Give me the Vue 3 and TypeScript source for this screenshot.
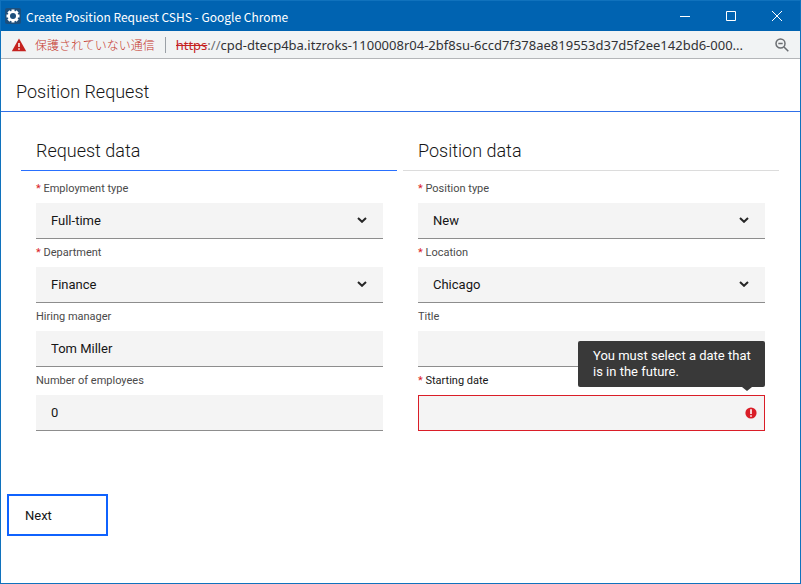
<script setup lang="ts">
import { reactive } from 'vue'

interface Field {
  id: string
  label: string
  kind: 'select' | 'text'
  required?: boolean
  options?: string[]
  error?: string
}
interface Section {
  title: string
  active: boolean
  fields: Field[]
}

const values = reactive<Record<string, string>>({
  employment: 'Full-time',
  department: 'Finance',
  manager: 'Tom Miller',
  employees: '0',
  positionType: 'New',
  location: 'Chicago',
  jobTitle: '',
  startingDate: '',
})

const sections: Section[] = [
  {
    title: 'Request data',
    active: true,
    fields: [
      { id: 'employment', label: 'Employment type', kind: 'select', required: true, options: ['Full-time'] },
      { id: 'department', label: 'Department', kind: 'select', required: true, options: ['Finance'] },
      { id: 'manager', label: 'Hiring manager', kind: 'text' },
      { id: 'employees', label: 'Number of employees', kind: 'text' },
    ],
  },
  {
    title: 'Position data',
    active: false,
    fields: [
      { id: 'positionType', label: 'Position type', kind: 'select', required: true, options: ['New'] },
      { id: 'location', label: 'Location', kind: 'select', required: true, options: ['Chicago'] },
      { id: 'jobTitle', label: 'Title', kind: 'text' },
      {
        id: 'startingDate',
        label: 'Starting date',
        kind: 'text',
        required: true,
        error: 'You must select a date that is in the future.',
      },
    ],
  },
]
</script>

<template>
  <div class="window">
    <header class="titlebar">
      <svg class="app-icon" viewBox="0 0 16 16" aria-hidden="true">
        <rect width="16" height="16" rx="2" fill="#1d4f7c" />
        <g fill="#fff">
          <rect v-for="n in 4" :key="n" x="6.5" y="1.5" width="3" height="13" :transform="`rotate(${n * 45} 8 8)`" />
          <circle cx="8" cy="8" r="5.2" />
        </g>
        <circle cx="8" cy="8" r="3" fill="#1d4f7c" />
      </svg>
      <span class="window-title">Create Position Request CSHS - Google Chrome</span>
      <div class="window-controls">
        <button type="button" aria-label="Minimize">
          <svg viewBox="0 0 12 12"><path d="M1 6.5h10" /></svg>
        </button>
        <button type="button" aria-label="Maximize">
          <svg viewBox="0 0 12 12"><path d="M1.5 1.5h9v9h-9z" /></svg>
        </button>
        <button type="button" aria-label="Close">
          <svg viewBox="0 0 12 12"><path d="M1 1l10 10M11 1L1 11" /></svg>
        </button>
      </div>
    </header>

    <div class="addressbar">
      <svg class="warning" viewBox="0 0 16 14" aria-hidden="true">
        <path d="M8 0.5L15.2 13.3H0.8z" fill="#c5221f" />
        <path d="M8 5v4M8 10.3v1.5" stroke="#fff" stroke-width="1.5" />
      </svg>
      <span class="insecure">保護されていない通信</span>
      <span class="divider"></span>
      <span class="url"><s>https</s><span class="scheme">://</span>cpd-dtecp4ba.itzroks-1100008r04-2bf8su-6ccd7f378ae819553d37d5f2ee142bd6-000...</span>
      <button type="button" class="zoom" aria-label="Zoom">
        <svg viewBox="0 0 14 14"><circle cx="5.5" cy="5.5" r="4.5" /><path d="M9 9l4.3 4.3M3.3 5.5h4.4" /></svg>
      </button>
    </div>

    <main>
      <h1>Position Request</h1>
      <form @submit.prevent>
        <div class="sections">
          <section v-for="section in sections" :key="section.title">
            <h2 :class="{ active: section.active }">{{ section.title }}</h2>
            <div class="fields">
              <div v-for="field in section.fields" :key="field.id" class="field">
                <label :for="field.id" :class="{ strong: field.error }"><span v-if="field.required" class="star">* </span>{{ field.label }}</label>
                <div class="control" :class="{ invalid: field.error }">
                  <select v-if="field.kind === 'select'" :id="field.id" v-model="values[field.id]">
                    <option v-for="option in field.options" :key="option">{{ option }}</option>
                  </select>
                  <input v-else :id="field.id" v-model="values[field.id]" type="text" />
                  <svg v-if="field.kind === 'select'" class="chevron" viewBox="0 0 10 6" aria-hidden="true">
                    <path d="M1 1l4 3.8L9 1" />
                  </svg>
                  <template v-if="field.error">
                    <svg class="alert" viewBox="0 0 12 12" aria-hidden="true">
                      <circle cx="6" cy="6" r="5.6" fill="#da1e28" />
                      <path d="M6 2.2v4.8M6 8.3v1.5" stroke="#fff" stroke-width="1.6" />
                    </svg>
                    <div class="tooltip" role="alert">{{ field.error }}</div>
                  </template>
                </div>
              </div>
            </div>
          </section>
        </div>
        <button type="submit" class="next">Next</button>
      </form>
    </main>
  </div>
</template>

<style>
body {
  margin: 0;
}
</style>

<style scoped>
.window {
  box-sizing: border-box;
  min-height: 100vh;
  border: 1px solid #1072bd;
  background: #fff;
  color: #161616;
  font-family: Roboto, "Liberation Sans", sans-serif;
}
button,
input,
select {
  font: inherit;
  color: inherit;
}
.titlebar {
  display: flex;
  align-items: center;
  height: 30px;
  padding-left: 4px;
  background: #0063b1;
  color: #fff;
  font-family: "Noto Sans CJK JP", "Open Sans", sans-serif;
  font-size: 12px;
}
.app-icon {
  width: 16px;
  height: 16px;
  margin-right: 5px;
}
.window-title {
  flex: 1;
  white-space: nowrap;
}
.window-controls {
  display: flex;
}
.window-controls button {
  display: grid;
  place-items: center;
  width: 46px;
  height: 30px;
  padding: 0;
  border: 0;
  background: none;
}
.window-controls svg {
  width: 12px;
  height: 12px;
  fill: none;
  stroke: #fff;
}
.addressbar {
  display: flex;
  align-items: center;
  box-sizing: border-box;
  height: 28px;
  padding: 0 11px 0 10px;
  border-bottom: 1px solid #b4b6b9;
  background: #f1f3f4;
  color: #303134;
  font-family: "Noto Sans", "Open Sans", sans-serif;
  font-size: 13px;
  white-space: nowrap;
}
.warning {
  width: 16px;
  height: 14px;
  margin-right: 8px;
}
.insecure {
  color: #c5372c;
  font-family: "Noto Sans CJK JP", sans-serif;
  font-size: 12px;
  font-weight: 300;
}
.divider {
  width: 1px;
  height: 16px;
  margin: 0 10px;
  background: #9aa0a6;
}
.url {
  flex: 1;
  min-width: 0;
  overflow: hidden;
}
.url s {
  color: #c5221f;
}
.scheme {
  color: #6b6e72;
}
.zoom {
  padding: 0;
  border: 0;
  background: none;
}
.zoom svg {
  display: block;
  width: 14px;
  height: 14px;
  fill: none;
  stroke: #6b6e72;
  stroke-width: 1.5;
}
h1,
h2 {
  margin: 0;
  font-size: 18px;
  font-weight: 300;
}
h1 {
  padding: 20px 15px 7px;
  border-bottom: 1px solid #3070e8;
  line-height: 25px;
}
.sections {
  display: grid;
  grid-template-columns: 1fr 1fr;
  gap: 6px;
  padding: 26px 21px 0 20px;
}
h2 {
  padding: 0 15px 7px;
  border-bottom: 1px solid #dcdcdc;
  line-height: 25px;
}
h2.active {
  border-color: #2970ff;
}
.fields {
  padding: 4px 14px 0 15px;
}
label {
  display: block;
  color: #4a4a4a;
  font-size: 11px;
  line-height: 28px;
}
label.strong {
  color: #161616;
}
.star {
  color: #da1e28;
}
.control {
  position: relative;
  box-sizing: border-box;
  height: 36px;
  border-bottom: 1px solid #8d8d8d;
  background: #f4f4f4;
  font-size: 13px;
}
.control.invalid {
  border: 1px solid #da1e28;
}
.control input,
.control select {
  display: block;
  box-sizing: border-box;
  width: 100%;
  height: 100%;
  padding: 0 15px;
  border: 0;
  border-radius: 0;
  outline: 0;
  appearance: none;
  background: transparent;
}
.chevron {
  position: absolute;
  top: 14px;
  right: 16px;
  width: 10px;
  height: 6px;
  fill: none;
  stroke: #262626;
  stroke-width: 2;
  pointer-events: none;
}
.alert {
  position: absolute;
  top: 11px;
  right: 7px;
  width: 12px;
  height: 12px;
}
.tooltip {
  position: absolute;
  right: -1px;
  bottom: 43px;
  box-sizing: border-box;
  width: 187px;
  padding: 7px 8px 7px 15px;
  border-radius: 2px;
  background: #393939;
  color: #fff;
  line-height: 16px;
}
.tooltip::after {
  content: "";
  position: absolute;
  top: 100%;
  right: 13px;
  border: 5px solid transparent;
  border-top: 4px solid #393939;
  border-bottom: 0;
}
.next {
  width: 101px;
  height: 42px;
  margin: 63px 6px 0;
  padding: 0 16px;
  border: 2px solid #0f62fe;
  background: #fff;
  font-size: 13px;
  text-align: left;
}
</style>
